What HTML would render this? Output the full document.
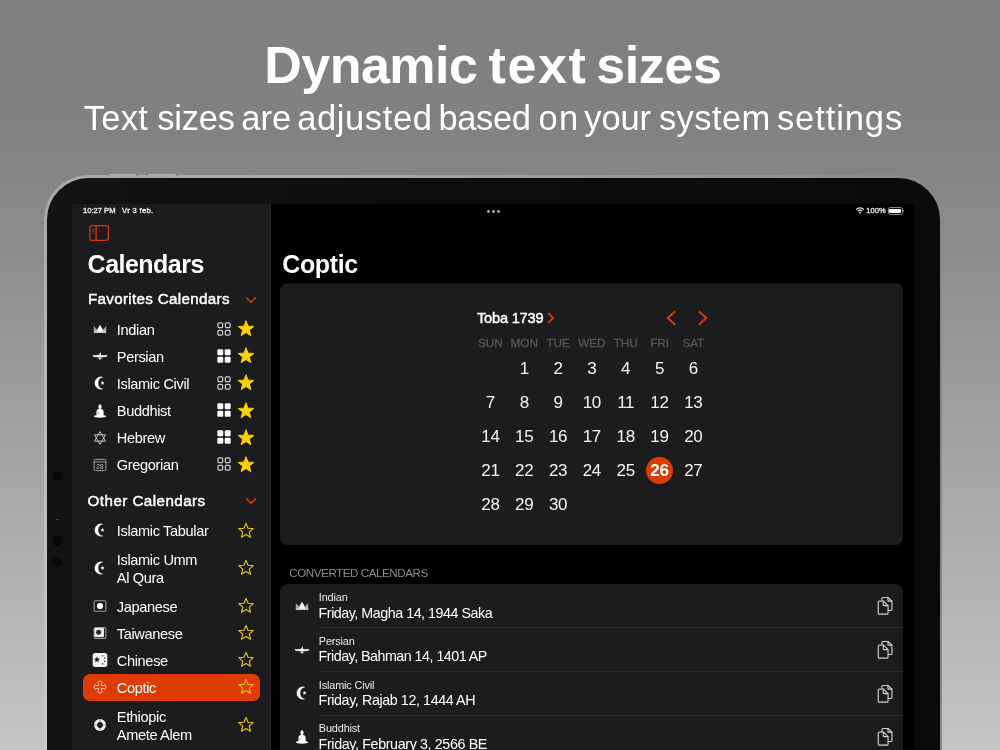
<!DOCTYPE html>
<html>
<head>
<meta charset="utf-8">
<title>Dynamic text sizes</title>
<style>
*{margin:0;padding:0;box-sizing:border-box}
html,body{width:1000px;height:750px;overflow:hidden}
body{font-family:"Liberation Sans",sans-serif;background:linear-gradient(180deg,#7f7f7f 0px,#818181 120px,#878787 200px,#c4c4c4 750px);position:relative;color:#fff}
.t{position:absolute;white-space:pre}
#root{position:absolute;left:0;top:0;width:1000px;height:750px;will-change:transform}
.i{position:absolute;overflow:visible}
#rim{position:absolute;left:44.4px;top:174.5px;width:897.8px;height:640px;border-radius:44.5px;background:linear-gradient(90deg,rgba(134,134,141,0) 0%,rgba(134,134,141,0) 35%,rgba(134,134,141,1) 100%),linear-gradient(180deg,#a8a8b0 0px,#ababb3 60px,#b9b9c0 235px,#c9c9cd 576px)}
#btn1,#btn2{position:absolute;top:173.7px;height:2.5px;border-radius:1px;background:#a9a9b1;border-left:1.2px solid #77777d;border-right:1.2px solid #77777d}
#btn1{left:108px;width:29px}#btn2{left:146.5px;width:30px}
#device{position:absolute;left:47.4px;top:177.5px;width:892.5px;height:640px;border-radius:41.5px;background:linear-gradient(90deg,#131314 0%,#0f0f10 30%,#0a0a0b 100%)}
#screen{position:absolute;left:72px;top:203.8px;width:842px;height:560px;background:#000;border-radius:2px}
#sidebar{position:absolute;left:72px;top:203.8px;width:198.9px;border-right:1px solid #222224;height:560px;background:#1c1c1e;border-radius:2px 0 0 0}
.dot{position:absolute;width:10px;height:10px;border-radius:50%;background:#080808}
.card{position:absolute;background:#1c1c1e;border-radius:8px}
</style>
</head>
<body>
<svg width="0" height="0" style="position:absolute"><defs>
<symbol id="sf" overflow="visible"><path d="M0.00 -8.30 L2.09 -2.87 L7.89 -2.56 L3.38 1.10 L4.88 6.71 L0.00 3.55 L-4.88 6.71 L-3.38 1.10 L-7.89 -2.56 L-2.09 -2.87Z" fill="#fbd10c" stroke="#fbd10c" stroke-width="0.9" stroke-linejoin="round"/></symbol>
<symbol id="so" overflow="visible"><path d="M0.00 -7.60 L2.03 -2.79 L7.23 -2.35 L3.28 1.07 L4.47 6.15 L0.00 3.45 L-4.47 6.15 L-3.28 1.07 L-7.23 -2.35 L-2.03 -2.79Z" fill="none" stroke="#e6c31c" stroke-width="1.15" stroke-linejoin="round"/></symbol>
<symbol id="go" overflow="visible"><rect x="-6.050000000000001" y="-6.050000000000001" width="4.7" height="4.7" rx="1.1" fill="none" stroke="#cfcfcf" stroke-width="1.2"/><rect x="-6.050000000000001" y="1.35" width="4.7" height="4.7" rx="1.1" fill="none" stroke="#cfcfcf" stroke-width="1.2"/><rect x="1.35" y="-6.050000000000001" width="4.7" height="4.7" rx="1.1" fill="none" stroke="#cfcfcf" stroke-width="1.2"/><rect x="1.35" y="1.35" width="4.7" height="4.7" rx="1.1" fill="none" stroke="#cfcfcf" stroke-width="1.2"/></symbol>
<symbol id="gf" overflow="visible"><rect x="-6.65" y="-6.65" width="5.9" height="5.9" rx="1.2" fill="#fff"/><rect x="-6.65" y="0.75" width="5.9" height="5.9" rx="1.2" fill="#fff"/><rect x="0.75" y="-6.65" width="5.9" height="5.9" rx="1.2" fill="#fff"/><rect x="0.75" y="0.75" width="5.9" height="5.9" rx="1.2" fill="#fff"/></symbol>
<symbol id="cd" overflow="visible"><path d="M-4.4 -2.2 L0 2.2 L4.4 -2.2" fill="none" stroke="#df3b05" stroke-width="1.5" stroke-linecap="round" stroke-linejoin="round"/></symbol>
<symbol id="crown" overflow="visible"><path d="M-6.2 3.7 V-2.4 Q-6.2 -2.9 -5.8 -2.5 L-3 0.6 L-0.4 -3.5 Q0 -4 0.4 -3.5 L3 0.6 L5.8 -2.5 Q6.2 -2.9 6.2 -2.4 V3.7 Z" fill="#a9a9ab"/><path d="M-3.2 2.8 L-0.4 -3.5 Q0 -4 0.4 -3.5 L3.2 2.8 Z" fill="#fff"/><rect x="-6.2" y="2.6" width="12.4" height="1.1" fill="#e4e4e4"/></symbol>
<symbol id="pers" overflow="visible"><path d="M-7.2 -1.1 C-5 -0.7 -2.5 -0.8 -1 -1.2 C-0.3 -1.8 0 -2.8 0.4 -3.9 C0.9 -2.8 0.9 -1.6 1.2 -1.1 C3 -0.8 5.5 -0.8 7.2 -1.1 C7.2 0.2 6.4 1 5.2 1.1 L1.5 1.2 C1.5 2.6 0.9 3.6 0 3.6 C-0.9 3.6 -1.6 2.6 -1.5 1.2 L-5.2 1.1 C-6.4 1 -7.2 0.2 -7.2 -1.1Z" fill="#f4f4f4"/><path d="M-2.6 2.2 L-1.4 1.3 L1.4 1.3 L2.6 2.2 L1.2 2.5 L-1.2 2.5Z" fill="#8c8c8e"/></symbol>
<symbol id="moon" overflow="visible"><path d="M2.9 -6.0 A6.3 6.3 0 1 0 2.7 6.1 A6.24 6.24 0 0 1 2.9 -6.0 Z" fill="#fff" stroke="#fff" stroke-width="0.3" stroke-linejoin="round"/><path d="M2.50 -2.15 L3.06 -0.72 L4.59 -0.63 L3.40 0.34 L3.79 1.83 L2.50 1.00 L1.21 1.83 L1.60 0.34 L0.41 -0.63 L1.94 -0.72Z" fill="#fff"/></symbol>
<symbol id="budd" overflow="visible"><path d="M0 -7 C1.2 -6 1.7 -5 1.6 -4 C1.5 -2.9 0.8 -2.3 0.5 -2.1 L-0.5 -2.1 C-0.8 -2.3 -1.5 -2.9 -1.6 -4 C-1.7 -5 -1.2 -6 0 -7Z" fill="#fff"/><path d="M-0.6 -2.3 L0.6 -2.3 C2.6 -2 3.6 -0.8 3.6 0.8 L3.6 4.4 L-3.3 4.4 C-3.9 2.5 -3.9 -0.5 -2.6 -1.6 C-2 -2 -1.2 -2.3 -0.6 -2.3Z" fill="#fff"/><ellipse cx="0" cy="5.2" rx="6.2" ry="1.5" fill="#fff"/><rect x="-2.8" y="1.3" width="1.7" height="1.5" rx="0.5" fill="#8e8e90"/></symbol>
<symbol id="david" overflow="visible"><path d="M0 -6.4 L5.5 3.2 L-5.5 3.2 Z M0 6.4 L-5.5 -3.2 L5.5 -3.2 Z" fill="none" stroke="#d0d0d0" stroke-width="0.9" stroke-linejoin="round"/></symbol>
<symbol id="greg" overflow="visible"><rect x="-5.9" y="-5.6" width="11.8" height="11.2" rx="1.4" fill="none" stroke="#a4a4a6" stroke-width="1"/><path d="M-5.9 -3.1 H5.9" stroke="#a4a4a6" stroke-width="0.9"/><text x="0" y="3.9" font-size="6.6" text-anchor="middle" fill="#c4c4c6" font-family="Liberation Sans, sans-serif">28</text></symbol>
<symbol id="jap" overflow="visible"><rect x="-5.9" y="-5.3" width="11.8" height="10.6" rx="1.4" fill="none" stroke="#9a9a9c" stroke-width="1.1"/><circle cx="0" cy="0" r="3.1" fill="#fff"/></symbol>
<symbol id="tai" overflow="visible"><rect x="-5.9" y="-5.4" width="11.8" height="10.8" rx="1.4" fill="none" stroke="#9a9a9c" stroke-width="1.1"/><rect x="-5.6" y="-5.1" width="9.6" height="9" rx="0.8" fill="#ececec"/><circle cx="-1.4" cy="-0.7" r="2.5" fill="#2a2a2c"/></symbol>
<symbol id="chi" overflow="visible"><rect x="-7.3" y="-7.1" width="14.6" height="14.2" rx="2.4" fill="#f7f7f7"/><path d="M-3.00 -3.70 L-2.18 -1.43 L0.23 -1.35 L-1.67 0.13 L-1.00 2.45 L-3.00 1.10 L-5.00 2.45 L-4.33 0.13 L-6.23 -1.35 L-3.82 -1.43Z" fill="#1c1c1e"/><circle cx="2.6" cy="-4.3" r="0.8" fill="#444"/><circle cx="4.6" cy="-1.9" r="0.8" fill="#444"/><circle cx="4.6" cy="1.4" r="0.8" fill="#444"/><circle cx="2.6" cy="3.9" r="0.8" fill="#444"/></symbol>
<symbol id="copt" overflow="visible"><path d="M-1.4 -1.4 L-1.4 -3.4 L-2.7 -4.6 L0 -6.1 L2.7 -4.6 L1.4 -3.4 L1.4 -1.4 L3.4 -1.4 L4.6 -2.7 L6.1 0 L4.6 2.7 L3.4 1.4 L1.4 1.4 L1.4 3.4 L2.7 4.6 L0 6.1 L-2.7 4.6 L-1.4 3.4 L-1.4 1.4 L-3.4 1.4 L-4.6 2.7 L-6.1 0 L-4.6 -2.7 L-3.4 -1.4 Z" fill="none" stroke="#ffcdb8" stroke-width="0.95" stroke-linejoin="round"/></symbol>
<symbol id="eth" overflow="visible"><circle cx="0" cy="0" r="4.45" fill="none" stroke="#f6f6f6" stroke-width="3.1"/><path d="M0 -6 V-2.9 M0 6 V2.9 M-6 0 H-2.9 M6 0 H2.9" stroke="#8f8f91" stroke-width="1.2"/></symbol>
<symbol id="copy" overflow="visible"><g fill="none" stroke="#d6d6d8" stroke-width="1.15" stroke-linejoin="round" stroke-linecap="round"><path d="M-3.2 -5.4 V-7.9 Q-3.2 -9 -2.1 -9 H3.3 L7.3 -5 V3.7 Q7.3 4.8 6.2 4.8 H3.6"/><path d="M3.1 -8.7 V-5.9 Q3.1 -5.1 3.9 -5.1 H7"/><path d="M-6 -5.2 H-1.5 L3.2 -0.5 V7.5 Q3.2 8.6 2.1 8.6 H-6 Q-7.1 8.6 -7.1 7.5 V-4.1 Q-7.1 -5.2 -6 -5.2 Z"/><path d="M-1.8 -4.9 V-1.4 Q-1.8 -0.4 -0.8 -0.4 H2.9"/></g></symbol>
<symbol id="cr" overflow="visible"><path d="M-2.4 -4.4 L2.2 0 L-2.4 4.4" fill="none" stroke="#df3b05" stroke-width="1.7" stroke-linecap="round" stroke-linejoin="round"/></symbol>
<symbol id="nl" overflow="visible"><path d="M3.6 -6.3 L-3.2 0 L3.6 6.3" fill="none" stroke="#df3b05" stroke-width="1.9" stroke-linecap="round" stroke-linejoin="round"/></symbol>
<symbol id="nr" overflow="visible"><path d="M-3.6 -6.3 L3.2 0 L-3.6 6.3" fill="none" stroke="#df3b05" stroke-width="1.9" stroke-linecap="round" stroke-linejoin="round"/></symbol>
</defs></svg>
<div id="root">
<div class="t" style="left:264.18px;top:35.40px;line-height:60px;height:60px;font-size:52px;font-weight:700;letter-spacing:-0.49px;">Dynamic</div>
<div class="t" style="left:488.49px;top:35.40px;line-height:60px;height:60px;font-size:52px;font-weight:700;letter-spacing:1.65px;">text</div>
<div class="t" style="left:596.26px;top:35.40px;line-height:60px;height:60px;font-size:52px;font-weight:700;letter-spacing:-0.4px;">sizes</div>
<div class="t" style="left:83.75px;top:95.60px;line-height:44px;height:44px;font-size:34.5px;letter-spacing:0.31px;">Text</div>
<div class="t" style="left:157.18px;top:95.60px;line-height:44px;height:44px;font-size:34.5px;letter-spacing:-0.22px;">sizes</div>
<div class="t" style="left:241.13px;top:95.60px;line-height:44px;height:44px;font-size:34.5px;letter-spacing:0.07px;">are</div>
<div class="t" style="left:297.13px;top:95.60px;line-height:44px;height:44px;font-size:34.5px;letter-spacing:0.62px;">adjusted</div>
<div class="t" style="left:438.43px;top:95.60px;line-height:44px;height:44px;font-size:34.5px;letter-spacing:-0.36px;">based</div>
<div class="t" style="left:538.5px;top:95.60px;line-height:44px;height:44px;font-size:34.5px;letter-spacing:1.2px;">on</div>
<div class="t" style="left:584.32px;top:95.60px;line-height:44px;height:44px;font-size:34.5px;letter-spacing:-0.17px;">your</div>
<div class="t" style="left:658.93px;top:95.60px;line-height:44px;height:44px;font-size:34.5px;letter-spacing:0.43px;">system</div>
<div class="t" style="left:776.93px;top:95.60px;line-height:44px;height:44px;font-size:34.5px;letter-spacing:0.91px;">settings</div>
<div id="rim"></div><div id="btn1"></div><div id="btn2"></div><div id="device"></div>
<div class="dot" style="left:52px;top:470.6px"></div>
<div class="dot" style="left:52px;top:535.7px"></div>
<div class="dot" style="left:52px;top:557.2px"></div>
<div style="position:absolute;left:55.5px;top:518.6px;width:3px;height:1.6px;border-radius:1px;background:#3f49c8"></div>
<div id="screen"></div><div id="sidebar"></div>
<div class="t" style="left:83px;top:206.00px;line-height:10px;height:10px;font-size:7.6px;color:#f0f0f0;-webkit-text-stroke:0.3px #f0f0f0;">10:27 PM</div>
<div class="t" style="left:122px;top:206.00px;line-height:10px;height:10px;font-size:7.6px;color:#f0f0f0;letter-spacing:0.35px;-webkit-text-stroke:0.3px #f0f0f0;">Vr 3 feb.</div>
<div style="position:absolute;left:486.90px;top:209.65px;width:2.9px;height:2.9px;border-radius:50%;background:#a4a4a6"></div>
<div style="position:absolute;left:491.80px;top:209.65px;width:2.9px;height:2.9px;border-radius:50%;background:#a4a4a6"></div>
<div style="position:absolute;left:496.70px;top:209.65px;width:2.9px;height:2.9px;border-radius:50%;background:#a4a4a6"></div>
<div class="t" style="left:866.3px;top:206.00px;line-height:10px;height:10px;font-size:7.5px;color:#f0f0f0;letter-spacing:0.1px;-webkit-text-stroke:0.3px #f0f0f0;">100%</div>
<svg class="i" style="left:859.75px;top:213.3px" width="1" height="1"><g fill="none" stroke="#f2f2f2" stroke-width="1.25"><path d="M-3.75 -3.55 A5.2 5.2 0 0 1 3.75 -3.55"/><path d="M-2.2 -1.9 A3.0 3.0 0 0 1 2.2 -1.9"/></g><circle cx="0" cy="-0.35" r="0.95" fill="#f2f2f2"/></svg>
<div style="position:absolute;left:888.1px;top:207.3px;width:14.7px;height:7.4px;border-radius:2.2px;border:0.8px solid #8a8a8e"></div><div style="position:absolute;left:889.3px;top:208.8px;width:12.1px;height:4.4px;border-radius:1.1px;background:#fff"></div><div style="position:absolute;left:903.2px;top:210.1px;width:1.1px;height:1.9px;border-radius:0 1px 1px 0;background:#8e8e93"></div>
<svg class="i" style="left:89.4px;top:225.2px" width="21" height="17" viewBox="0 0 21 17"><g fill="none" stroke="#d63a0c" stroke-width="1.3"><rect x="0.75" y="0.65" width="18.6" height="14.7" rx="2.4"/><path d="M7.1 0.65 V15.35"/><path d="M2.7 4.2 H5.3 M2.7 6.25 H5.3 M2.7 8.3 H5.3" stroke-width="0.85"/></g></svg>
<div class="t" style="left:87.6px;top:249.10px;line-height:30px;height:30px;font-size:25px;font-weight:700;letter-spacing:-0.52px;">Calendars</div>
<div class="t" style="left:282.2px;top:249.10px;line-height:30px;height:30px;font-size:25px;font-weight:700;letter-spacing:-0.35px;">Coptic</div>
<div class="t" style="left:88px;top:289.40px;line-height:20px;height:20px;font-size:15.2px;letter-spacing:0.31px;-webkit-text-stroke:0.45px #fff;">Favorites Calendars</div>
<svg class="i" style="left:251px;top:300.1px" width="1" height="1"><use href="#cd" /></svg>
<svg class="i" style="left:100.2px;top:329.4px" width="1" height="1"><use href="#crown" /></svg>
<div class="t" style="left:116.8px;top:319.60px;line-height:20px;height:20px;font-size:14.6px;letter-spacing:-0.36px;">Indian</div>
<svg class="i" style="left:223.6px;top:329.0px" width="1" height="1"><use href="#go" /></svg>
<svg class="i" style="left:245.85px;top:329.3px" width="1" height="1"><use href="#sf" /></svg>
<svg class="i" style="left:100.2px;top:356.48px" width="1" height="1"><use href="#pers" /></svg>
<div class="t" style="left:116.8px;top:346.68px;line-height:20px;height:20px;font-size:14.6px;letter-spacing:-0.36px;">Persian</div>
<svg class="i" style="left:223.6px;top:356.08px" width="1" height="1"><use href="#gf" /></svg>
<svg class="i" style="left:245.85px;top:356.38px" width="1" height="1"><use href="#sf" /></svg>
<svg class="i" style="left:100.2px;top:382.96px" width="1" height="1"><use href="#moon" /></svg>
<div class="t" style="left:116.8px;top:373.76px;line-height:20px;height:20px;font-size:14.6px;letter-spacing:-0.36px;">Islamic Civil</div>
<svg class="i" style="left:223.6px;top:383.16px" width="1" height="1"><use href="#go" /></svg>
<svg class="i" style="left:245.85px;top:383.46px" width="1" height="1"><use href="#sf" /></svg>
<svg class="i" style="left:100.2px;top:410.64px" width="1" height="1"><use href="#budd" /></svg>
<div class="t" style="left:116.8px;top:400.84px;line-height:20px;height:20px;font-size:14.6px;letter-spacing:-0.36px;">Buddhist</div>
<svg class="i" style="left:223.6px;top:410.24px" width="1" height="1"><use href="#gf" /></svg>
<svg class="i" style="left:245.85px;top:410.54px" width="1" height="1"><use href="#sf" /></svg>
<svg class="i" style="left:100.2px;top:437.72px" width="1" height="1"><use href="#david" /></svg>
<div class="t" style="left:116.8px;top:427.92px;line-height:20px;height:20px;font-size:14.6px;letter-spacing:-0.36px;">Hebrew</div>
<svg class="i" style="left:223.6px;top:437.32px" width="1" height="1"><use href="#gf" /></svg>
<svg class="i" style="left:245.85px;top:437.62px" width="1" height="1"><use href="#sf" /></svg>
<svg class="i" style="left:100.2px;top:464.8px" width="1" height="1"><use href="#greg" /></svg>
<div class="t" style="left:116.8px;top:455.00px;line-height:20px;height:20px;font-size:14.6px;letter-spacing:-0.36px;">Gregorian</div>
<svg class="i" style="left:223.6px;top:464.4px" width="1" height="1"><use href="#go" /></svg>
<svg class="i" style="left:245.85px;top:464.7px" width="1" height="1"><use href="#sf" /></svg>
<div class="t" style="left:87.6px;top:490.80px;line-height:20px;height:20px;font-size:15.2px;letter-spacing:0.44px;-webkit-text-stroke:0.45px #fff;">Other Calendars</div>
<svg class="i" style="left:250.9px;top:501.2px" width="1" height="1"><use href="#cd" /></svg>
<div style="position:absolute;left:83px;top:673.8px;width:177px;height:26.8px;border-radius:7px;background:#df3b05"></div>
<svg class="i" style="left:100.2px;top:530.4px" width="1" height="1"><use href="#moon" /></svg>
<div class="t" style="left:116.8px;top:521.20px;line-height:20px;height:20px;font-size:14.6px;letter-spacing:-0.36px;">Islamic Tabular</div>
<svg class="i" style="left:245.75px;top:530.7px" width="1" height="1"><use href="#so" /></svg>
<svg class="i" style="left:100.2px;top:568.1px" width="1" height="1"><use href="#moon" /></svg>
<div class="t" style="left:116.8px;top:550.40px;line-height:20px;height:20px;font-size:14.6px;letter-spacing:-0.36px;">Islamic Umm</div>
<div class="t" style="left:116.8px;top:567.60px;line-height:20px;height:20px;font-size:14.6px;letter-spacing:-0.36px;">Al Qura</div>
<svg class="i" style="left:245.75px;top:568.4px" width="1" height="1"><use href="#so" /></svg>
<svg class="i" style="left:100.2px;top:606.3px" width="1" height="1"><use href="#jap" /></svg>
<div class="t" style="left:116.8px;top:596.80px;line-height:20px;height:20px;font-size:14.6px;letter-spacing:-0.36px;">Japanese</div>
<svg class="i" style="left:245.75px;top:606.0px" width="1" height="1"><use href="#so" /></svg>
<svg class="i" style="left:100.2px;top:633.1px" width="1" height="1"><use href="#tai" /></svg>
<div class="t" style="left:116.8px;top:623.90px;line-height:20px;height:20px;font-size:14.6px;letter-spacing:-0.36px;">Taiwanese</div>
<svg class="i" style="left:245.75px;top:632.8px" width="1" height="1"><use href="#so" /></svg>
<svg class="i" style="left:100.2px;top:660px" width="1" height="1"><use href="#chi" /></svg>
<div class="t" style="left:116.8px;top:651.00px;line-height:20px;height:20px;font-size:14.6px;letter-spacing:-0.36px;">Chinese</div>
<svg class="i" style="left:245.75px;top:659.7px" width="1" height="1"><use href="#so" /></svg>
<svg class="i" style="left:100.2px;top:687.3px" width="1" height="1"><use href="#copt" /></svg>
<div class="t" style="left:116.8px;top:678.00px;line-height:20px;height:20px;font-size:14.6px;letter-spacing:-0.36px;">Coptic</div>
<svg class="i" style="left:245.75px;top:687.0px" width="1" height="1"><use href="#so" /></svg>
<svg class="i" style="left:100.2px;top:725.3px" width="1" height="1"><use href="#eth" /></svg>
<div class="t" style="left:116.8px;top:706.90px;line-height:20px;height:20px;font-size:14.6px;letter-spacing:-0.36px;">Ethiopic</div>
<div class="t" style="left:116.8px;top:724.80px;line-height:20px;height:20px;font-size:14.6px;letter-spacing:-0.36px;">Amete Alem</div>
<svg class="i" style="left:245.75px;top:725.0px" width="1" height="1"><use href="#so" /></svg>
<div class="card" style="left:279.8px;top:282.5px;width:623.6px;height:262px"></div>
<div class="t" style="left:477px;top:307.70px;line-height:20px;height:20px;font-size:14.6px;letter-spacing:-0.2px;-webkit-text-stroke:0.45px #fff;">Toba 1739</div>
<svg class="i" style="left:551.3px;top:317.8px" width="1" height="1"><use href="#cr" /></svg>
<svg class="i" style="left:670.5px;top:317.6px" width="1" height="1"><use href="#nl" /></svg>
<svg class="i" style="left:702.5px;top:317.6px" width="1" height="1"><use href="#nr" /></svg>
<div class="t" style="left:470.4px;top:336.00px;line-height:14px;height:14px;font-size:11.8px;color:#58585c;letter-spacing:-0.1px;width:40px;text-align:center;-webkit-text-stroke:0.3px #58585c;">SUN</div>
<div class="t" style="left:504.22px;top:336.00px;line-height:14px;height:14px;font-size:11.8px;color:#58585c;letter-spacing:-0.1px;width:40px;text-align:center;-webkit-text-stroke:0.3px #58585c;">MON</div>
<div class="t" style="left:538.04px;top:336.00px;line-height:14px;height:14px;font-size:11.8px;color:#58585c;letter-spacing:-0.1px;width:40px;text-align:center;-webkit-text-stroke:0.3px #58585c;">TUE</div>
<div class="t" style="left:571.86px;top:336.00px;line-height:14px;height:14px;font-size:11.8px;color:#58585c;letter-spacing:-0.1px;width:40px;text-align:center;-webkit-text-stroke:0.3px #58585c;">WED</div>
<div class="t" style="left:605.68px;top:336.00px;line-height:14px;height:14px;font-size:11.8px;color:#58585c;letter-spacing:-0.1px;width:40px;text-align:center;-webkit-text-stroke:0.3px #58585c;">THU</div>
<div class="t" style="left:639.5px;top:336.00px;line-height:14px;height:14px;font-size:11.8px;color:#58585c;letter-spacing:-0.1px;width:40px;text-align:center;-webkit-text-stroke:0.3px #58585c;">FRI</div>
<div class="t" style="left:673.3199999999999px;top:336.00px;line-height:14px;height:14px;font-size:11.8px;color:#58585c;letter-spacing:-0.1px;width:40px;text-align:center;-webkit-text-stroke:0.3px #58585c;">SAT</div>
<div style="position:absolute;left:645.9px;top:456.5px;width:27px;height:27px;border-radius:50%;background:#df3b05"></div>
<div class="t" style="left:504.22px;top:357.50px;line-height:22px;height:22px;font-size:17px;color:#f4f4f4;letter-spacing:-0.3px;width:40px;text-align:center;">1</div>
<div class="t" style="left:538.04px;top:357.50px;line-height:22px;height:22px;font-size:17px;color:#f4f4f4;letter-spacing:-0.3px;width:40px;text-align:center;">2</div>
<div class="t" style="left:571.86px;top:357.50px;line-height:22px;height:22px;font-size:17px;color:#f4f4f4;letter-spacing:-0.3px;width:40px;text-align:center;">3</div>
<div class="t" style="left:605.68px;top:357.50px;line-height:22px;height:22px;font-size:17px;color:#f4f4f4;letter-spacing:-0.3px;width:40px;text-align:center;">4</div>
<div class="t" style="left:639.5px;top:357.50px;line-height:22px;height:22px;font-size:17px;color:#f4f4f4;letter-spacing:-0.3px;width:40px;text-align:center;">5</div>
<div class="t" style="left:673.3199999999999px;top:357.50px;line-height:22px;height:22px;font-size:17px;color:#f4f4f4;letter-spacing:-0.3px;width:40px;text-align:center;">6</div>
<div class="t" style="left:470.4px;top:391.65px;line-height:22px;height:22px;font-size:17px;color:#f4f4f4;letter-spacing:-0.3px;width:40px;text-align:center;">7</div>
<div class="t" style="left:504.22px;top:391.65px;line-height:22px;height:22px;font-size:17px;color:#f4f4f4;letter-spacing:-0.3px;width:40px;text-align:center;">8</div>
<div class="t" style="left:538.04px;top:391.65px;line-height:22px;height:22px;font-size:17px;color:#f4f4f4;letter-spacing:-0.3px;width:40px;text-align:center;">9</div>
<div class="t" style="left:571.86px;top:391.65px;line-height:22px;height:22px;font-size:17px;color:#f4f4f4;letter-spacing:-0.3px;width:40px;text-align:center;">10</div>
<div class="t" style="left:605.68px;top:391.65px;line-height:22px;height:22px;font-size:17px;color:#f4f4f4;letter-spacing:-0.3px;width:40px;text-align:center;">11</div>
<div class="t" style="left:639.5px;top:391.65px;line-height:22px;height:22px;font-size:17px;color:#f4f4f4;letter-spacing:-0.3px;width:40px;text-align:center;">12</div>
<div class="t" style="left:673.3199999999999px;top:391.65px;line-height:22px;height:22px;font-size:17px;color:#f4f4f4;letter-spacing:-0.3px;width:40px;text-align:center;">13</div>
<div class="t" style="left:470.4px;top:425.80px;line-height:22px;height:22px;font-size:17px;color:#f4f4f4;letter-spacing:-0.3px;width:40px;text-align:center;">14</div>
<div class="t" style="left:504.22px;top:425.80px;line-height:22px;height:22px;font-size:17px;color:#f4f4f4;letter-spacing:-0.3px;width:40px;text-align:center;">15</div>
<div class="t" style="left:538.04px;top:425.80px;line-height:22px;height:22px;font-size:17px;color:#f4f4f4;letter-spacing:-0.3px;width:40px;text-align:center;">16</div>
<div class="t" style="left:571.86px;top:425.80px;line-height:22px;height:22px;font-size:17px;color:#f4f4f4;letter-spacing:-0.3px;width:40px;text-align:center;">17</div>
<div class="t" style="left:605.68px;top:425.80px;line-height:22px;height:22px;font-size:17px;color:#f4f4f4;letter-spacing:-0.3px;width:40px;text-align:center;">18</div>
<div class="t" style="left:639.5px;top:425.80px;line-height:22px;height:22px;font-size:17px;color:#f4f4f4;letter-spacing:-0.3px;width:40px;text-align:center;">19</div>
<div class="t" style="left:673.3199999999999px;top:425.80px;line-height:22px;height:22px;font-size:17px;color:#f4f4f4;letter-spacing:-0.3px;width:40px;text-align:center;">20</div>
<div class="t" style="left:470.4px;top:459.95px;line-height:22px;height:22px;font-size:17px;color:#f4f4f4;letter-spacing:-0.3px;width:40px;text-align:center;">21</div>
<div class="t" style="left:504.22px;top:459.95px;line-height:22px;height:22px;font-size:17px;color:#f4f4f4;letter-spacing:-0.3px;width:40px;text-align:center;">22</div>
<div class="t" style="left:538.04px;top:459.95px;line-height:22px;height:22px;font-size:17px;color:#f4f4f4;letter-spacing:-0.3px;width:40px;text-align:center;">23</div>
<div class="t" style="left:571.86px;top:459.95px;line-height:22px;height:22px;font-size:17px;color:#f4f4f4;letter-spacing:-0.3px;width:40px;text-align:center;">24</div>
<div class="t" style="left:605.68px;top:459.95px;line-height:22px;height:22px;font-size:17px;color:#f4f4f4;letter-spacing:-0.3px;width:40px;text-align:center;">25</div>
<div class="t" style="left:639.5px;top:459.95px;line-height:22px;height:22px;font-size:17px;font-weight:700;letter-spacing:-0.3px;width:40px;text-align:center;">26</div>
<div class="t" style="left:673.3199999999999px;top:459.95px;line-height:22px;height:22px;font-size:17px;color:#f4f4f4;letter-spacing:-0.3px;width:40px;text-align:center;">27</div>
<div class="t" style="left:470.4px;top:494.10px;line-height:22px;height:22px;font-size:17px;color:#f4f4f4;letter-spacing:-0.3px;width:40px;text-align:center;">28</div>
<div class="t" style="left:504.22px;top:494.10px;line-height:22px;height:22px;font-size:17px;color:#f4f4f4;letter-spacing:-0.3px;width:40px;text-align:center;">29</div>
<div class="t" style="left:538.04px;top:494.10px;line-height:22px;height:22px;font-size:17px;color:#f4f4f4;letter-spacing:-0.3px;width:40px;text-align:center;">30</div>
<div class="t" style="left:289.3px;top:565.90px;line-height:14px;height:14px;font-size:11.6px;color:#8b8b91;letter-spacing:-0.43px;">CONVERTED CALENDARS</div>
<div class="card" style="left:279.8px;top:584.1px;width:623.6px;height:200px"></div>
<div class="t" style="left:318.8px;top:590.20px;line-height:14px;height:14px;font-size:10.9px;color:#ececee;letter-spacing:-0.15px;">Indian</div>
<div class="t" style="left:318.6px;top:602.60px;line-height:20px;height:20px;font-size:14.3px;letter-spacing:-0.48px;">Friday, Magha 14, 1944 Saka</div>
<svg class="i" style="left:302.2px;top:606.2px" width="1" height="1"><use href="#crown" /></svg>
<svg class="i" style="left:885px;top:606.0px" width="1" height="1"><use href="#copy" transform="scale(0.95)"/></svg>
<div style="position:absolute;left:319.6px;top:627.3px;width:584px;height:1px;background:#2a2a2d"></div>
<div class="t" style="left:318.8px;top:633.95px;line-height:14px;height:14px;font-size:10.9px;color:#ececee;letter-spacing:-0.15px;">Persian</div>
<div class="t" style="left:318.6px;top:646.35px;line-height:20px;height:20px;font-size:14.3px;letter-spacing:-0.52px;">Friday, Bahman 14, 1401 AP</div>
<svg class="i" style="left:302.2px;top:649.95px" width="1" height="1"><use href="#pers" /></svg>
<svg class="i" style="left:885px;top:649.75px" width="1" height="1"><use href="#copy" transform="scale(0.95)"/></svg>
<div style="position:absolute;left:319.6px;top:671.0px;width:584px;height:1px;background:#2a2a2d"></div>
<div class="t" style="left:318.8px;top:677.70px;line-height:14px;height:14px;font-size:10.9px;color:#ececee;letter-spacing:-0.15px;">Islamic Civil</div>
<div class="t" style="left:318.6px;top:690.10px;line-height:20px;height:20px;font-size:14.3px;letter-spacing:-0.405px;">Friday, Rajab 12, 1444 AH</div>
<svg class="i" style="left:302.2px;top:693.1px" width="1" height="1"><use href="#moon" /></svg>
<svg class="i" style="left:885px;top:693.5px" width="1" height="1"><use href="#copy" transform="scale(0.95)"/></svg>
<div style="position:absolute;left:319.6px;top:714.8px;width:584px;height:1px;background:#2a2a2d"></div>
<div class="t" style="left:318.8px;top:721.45px;line-height:14px;height:14px;font-size:10.9px;color:#ececee;letter-spacing:-0.15px;">Buddhist</div>
<div class="t" style="left:318.6px;top:733.85px;line-height:20px;height:20px;font-size:14.3px;letter-spacing:-0.375px;">Friday, February 3, 2566 BE</div>
<svg class="i" style="left:302.2px;top:737.45px" width="1" height="1"><use href="#budd" /></svg>
<svg class="i" style="left:885px;top:737.25px" width="1" height="1"><use href="#copy" transform="scale(0.95)"/></svg>
<div style="position:absolute;left:319.6px;top:758.5px;width:584px;height:1px;background:#2a2a2d"></div>
</div>
</body>
</html>
